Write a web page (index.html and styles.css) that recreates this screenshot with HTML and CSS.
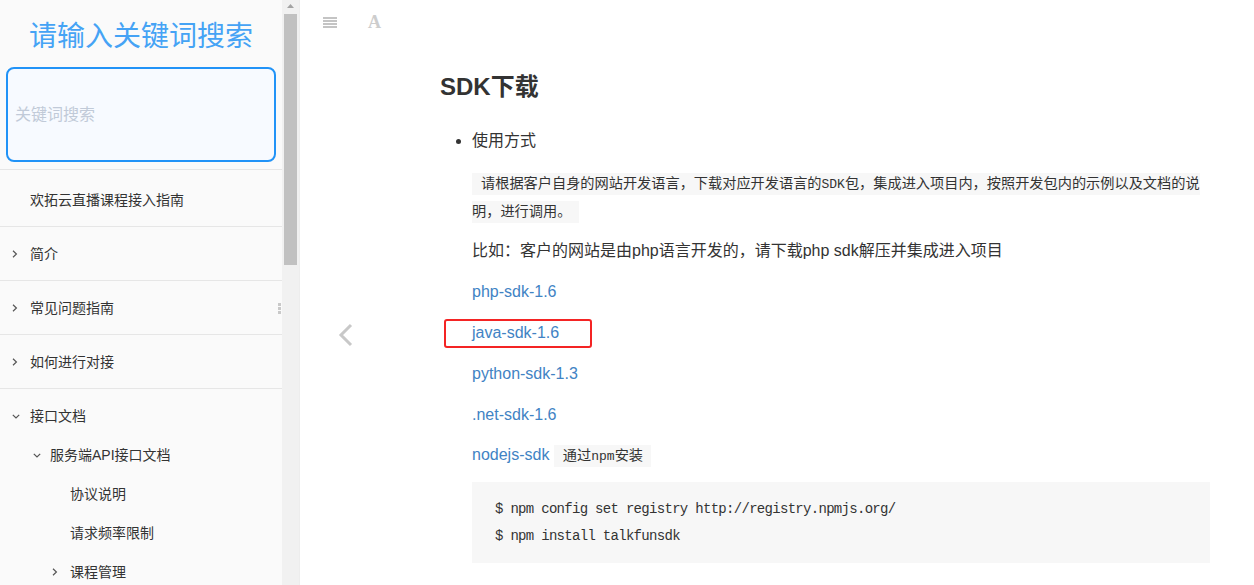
FILE: index.html
```html
<!DOCTYPE html>
<html lang="zh-CN">
<head>
<meta charset="utf-8">
<title>SDK下载</title>
<link rel="stylesheet" href="styles.css">
</head>
<body>
<div class="book">
  <aside class="summary">
    <div class="summary-scroll">
      <div class="search">
        <div class="search-title">请输入关键词搜索</div>
        <div class="search-box"><span class="placeholder">关键词搜索</span></div>
      </div>
      <ul class="toc">
        <li class="item first"><span class="lvl0-text">欢拓云直播课程接入指南</span></li>
        <li class="item"><span class="chev"><svg width="6" height="8" viewBox="0 0 6 8"><polyline points="1,0.8 4.4,4 1,7.2" fill="none" stroke="#555" stroke-width="1.2"/></svg></span><span>简介</span></li>
        <li class="item"><span class="chev"><svg width="6" height="8" viewBox="0 0 6 8"><polyline points="1,0.8 4.4,4 1,7.2" fill="none" stroke="#555" stroke-width="1.2"/></svg></span><span>常见问题指南</span></li>
        <li class="item"><span class="chev"><svg width="6" height="8" viewBox="0 0 6 8"><polyline points="1,0.8 4.4,4 1,7.2" fill="none" stroke="#555" stroke-width="1.2"/></svg></span><span>如何进行对接</span></li>
        <li class="open">
          <div class="row lvl0 open-row"><span class="chev"><svg width="8" height="5" viewBox="0 0 8 5"><polyline points="0.8,0.8 4,4 7.2,0.8" fill="none" stroke="#555" stroke-width="1.2"/></svg></span><span>接口文档</span></div>
          <ul class="sub">
            <li class="row lvl1"><span class="chev"><svg width="8" height="5" viewBox="0 0 8 5"><polyline points="0.8,0.8 4,4 7.2,0.8" fill="none" stroke="#555" stroke-width="1.2"/></svg></span><span>服务端API接口文档</span></li>
            <li class="row lvl2"><span class="chev"></span><span>协议说明</span></li>
            <li class="row lvl2"><span class="chev"></span><span>请求频率限制</span></li>
            <li class="row lvl2"><span class="chev"><svg width="6" height="8" viewBox="0 0 6 8"><polyline points="1,0.8 4.4,4 1,7.2" fill="none" stroke="#555" stroke-width="1.2"/></svg></span><span>课程管理</span></li>
          </ul>
        </li>
      </ul>
      <div class="grip"></div>
    </div>
    <div class="scrollbar">
      <div class="sb-up"><svg width="7" height="4" viewBox="0 0 7 4"><polygon points="0,4 3.5,0 7,4" fill="#a3a3a3"/></svg></div>
      <div class="sb-thumb"></div>
    </div>
  </aside>

  <main class="body">
    <header class="toolbar">
      <span class="icon-bars"><i></i><i></i><i></i><i></i></span>
      <span class="icon-font">A</span>
    </header>

    <a class="nav-prev" href="#"><svg width="16" height="24" viewBox="0 0 16 24"><polyline points="13,2 3,12 13,22" fill="none" stroke="#c8c8c8" stroke-width="3"/></svg></a>

    <section class="page-inner">
      <h1 class="title">SDK下载</h1>
      <ul class="content-list">
        <li>
          <p class="lead">使用方式</p>
          <p class="codep"><code class="inline"><span>请根据客户自身的网站开发语言，下载对应开发语言的</span><span class="m">SDK</span><span>包，集成进入项目内，按照开发包内的示例以及文档的说</span><span>明，进行调用。</span></code></p>
          <p>比如：客户的网站是由php语言开发的，请下载php sdk解压并集成进入项目</p>
          <p><a class="link" href="#">php-sdk-1.6</a></p>
          <p class="marked"><a class="link" href="#">java-sdk-1.6</a><span class="redbox"></span></p>
          <p><a class="link" href="#">python-sdk-1.3</a></p>
          <p><a class="link" href="#">.net-sdk-1.6</a></p>
          <p><a class="link" href="#">nodejs-sdk</a> <code class="inline">通过<span class="m">npm</span>安装</code></p>
          <pre class="codeblock">$ npm config set registry http://registry.npmjs.org/
$ npm install talkfunsdk</pre>
        </li>
      </ul>
    </section>
  </main>
</div>
</body>
</html>
```

FILE: styles.css
```css
html, body {
  margin: 0;
  padding: 0;
  background: #fff;
}

.book {
  display: flex;
  height: 585px;
  overflow: hidden;
  font-family: "Liberation Sans", "Noto Sans CJK SC", sans-serif;
  color: #333;
}

/* ---------- sidebar ---------- */
.summary {
  display: flex;
  flex: none;
  width: 300px;
  box-sizing: border-box;
  background: #fafafa;
  border-right: 1px solid #ededed;
}

.summary-scroll {
  width: 282px;
  flex: none;
  overflow: hidden;
  position: relative;
}

.search {
  padding-bottom: 7px;
  border-bottom: 1px solid #e6e6e6;
}

.search-title {
  padding-top: 19px;
  text-align: center;
  font-size: 28px;
  line-height: 36px;
  color: #45a3f5;
}

.search-box {
  margin: 12px 6px 0;
  height: 95px;
  box-sizing: border-box;
  border: 2px solid #2193f7;
  border-radius: 8px;
  background: #f7faff;
  display: flex;
  align-items: center;
  padding-left: 7px;
  padding-bottom: 3px;
}

.placeholder {
  font-size: 16px;
  color: #c1cad8;
}

.toc, .sub {
  list-style: none;
  margin: 0;
  padding: 0;
}

.item {
  display: flex;
  align-items: center;
  padding: 17px 0 16px 12px;
  font-size: 14px;
  line-height: 20px;
  border-bottom: 1px solid #e6e6e6;
}

.item.first {
  padding-top: 20px;
  padding-left: 30px;
}

.row {
  display: flex;
  align-items: center;
  font-size: 14px;
  line-height: 20px;
}

.open-row {
  padding: 17px 0 9px 12px;
}

.lvl1 {
  padding: 10px 0 9px 33px;
}

.lvl2 {
  padding: 10px 0 9px 52px;
}

.chev {
  width: 18px;
  flex: none;
  display: flex;
  align-items: center;
}

.lvl1 .chev {
  width: 17px;
}

.chev svg {
  display: block;
}

.grip {
  position: absolute;
  left: 278px;
  top: 303px;
  width: 3px;
  height: 11px;
  background: repeating-linear-gradient(to bottom, #c9c9c9 0 3px, transparent 3px 4px);
}

.scrollbar {
  width: 17px;
  flex: none;
  background: #f1f1f1;
  display: flex;
  flex-direction: column;
  align-items: center;
}

.sb-up {
  height: 10px;
  padding-top: 4px;
  display: flex;
  justify-content: center;
}

.sb-up svg {
  display: block;
}

.sb-thumb {
  width: 13px;
  height: 251px;
  background: #c1c1c1;
}

/* ---------- main ---------- */
.body {
  flex: 1;
  position: relative;
  background: #fff;
}

.toolbar {
  height: 44px;
  display: flex;
  align-items: center;
  padding-left: 23px;
}

.icon-bars {
  display: flex;
  flex-direction: column;
  gap: 1px;
  width: 14px;
}

.icon-bars i {
  display: block;
  height: 2px;
  background: #c4c4c4;
}

.icon-font {
  margin-left: 31px;
  font-family: "Liberation Serif", serif;
  font-weight: bold;
  font-size: 18px;
  line-height: 20px;
  color: #cdcdcd;
}

.nav-prev {
  position: absolute;
  left: 38px;
  top: 323px;
  display: block;
  width: 16px;
  height: 24px;
}

.nav-prev svg {
  display: block;
}

.page-inner {
  padding-left: 140px;
  width: 770px;
}

.title {
  margin: 25px 0 22.4px;
  font-size: 24px;
  line-height: 36px;
  font-weight: bold;
  color: #333;
}

.content-list {
  margin: 0;
  padding-left: 32px;
  font-size: 16px;
}

.content-list p {
  margin: 0 0 13.6px;
  line-height: 27.2px;
}

.content-list p.lead {
  margin-bottom: 14.4px;
}

.content-list p.codep {
  line-height: 28px;
  margin-bottom: 12.5px;
}

.inline {
  font-family: "Liberation Mono", "Noto Sans CJK SC", monospace;
  font-size: 14.2px;
  line-height: 1;
  background: #f7f7f7;
  padding: 3px 8px 3px 9px;
  color: #333;
}

.m {
  font-size: 13px;
}

.link {
  color: #4183c4;
  text-decoration: none;
}

.marked {
  position: relative;
}

.redbox {
  position: absolute;
  left: -28px;
  top: 0;
  width: 148px;
  height: 29px;
  box-sizing: border-box;
  border: 2px solid #f42424;
  border-radius: 3px;
}

.codeblock {
  margin: 0;
  background: #f7f7f7;
  padding: 13.5px 23px;
  font-family: "Liberation Mono", monospace;
  font-size: 14px;
  letter-spacing: -0.7px;
  line-height: 27px;
  color: #333;
}
```
